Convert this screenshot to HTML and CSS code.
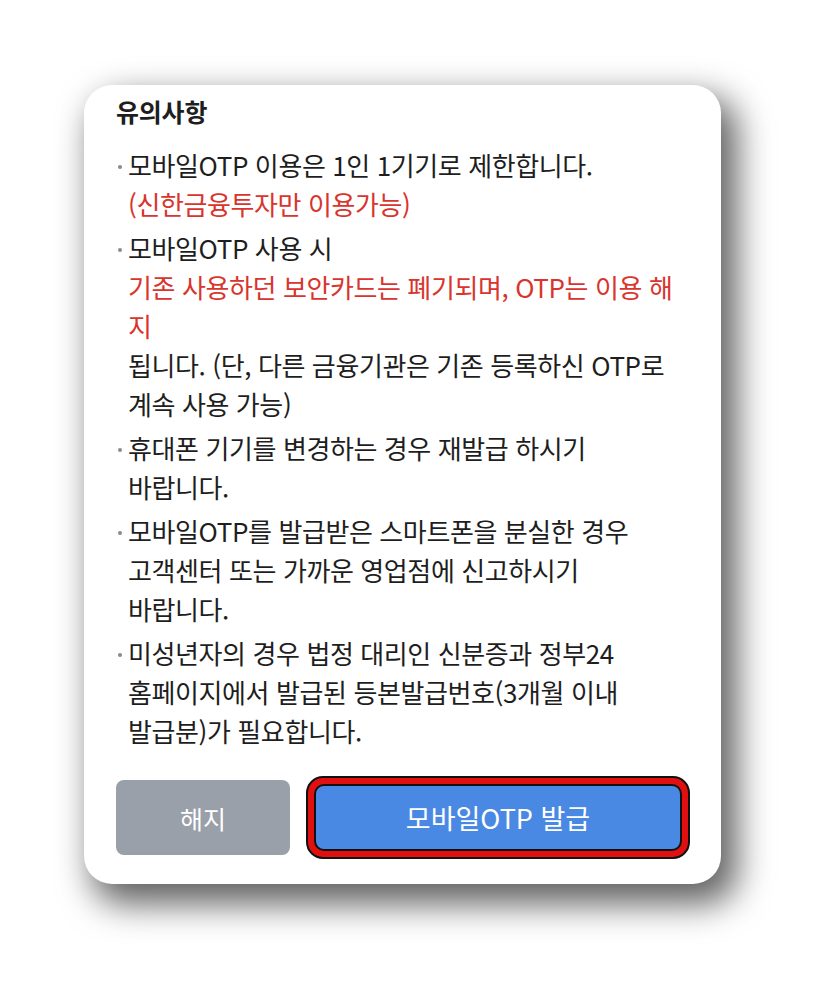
FILE: index.html
```html
<!DOCTYPE html>
<html lang="ko">
<head>
<meta charset="utf-8">
<title>유의사항</title>
<link rel="stylesheet" href="styles.css">
</head>
<body>
<div class="sheet">
  <h2 class="title">유의사항</h2>
  <ul class="notes">
    <li>모바일OTP 이용은 1인 1기기로 제한합니다.<br><span class="warn">(신한금융투자만 이용가능)</span></li>
    <li>모바일OTP 사용 시<br><span class="warn">기존 사용하던 보안카드는 폐기되며, OTP는 이용 해<br>지</span><br>됩니다. (단, 다른 금융기관은 기존 등록하신 OTP로<br>계속 사용 가능)</li>
    <li>휴대폰 기기를 변경하는 경우 재발급 하시기<br>바랍니다.</li>
    <li>모바일OTP를 발급받은 스마트폰을 분실한 경우<br>고객센터 또는 가까운 영업점에 신고하시기<br>바랍니다.</li>
    <li>미성년자의 경우 법정 대리인 신분증과 정부24<br>홈페이지에서 발급된 등본발급번호(3개월 이내<br>발급분)가 필요합니다.</li>
  </ul>
  <div class="actions">
    <button class="btn btn-cancel" type="button">해지</button>
    <div class="highlight">
      <button class="btn btn-issue" type="button">모바일OTP 발급</button>
    </div>
  </div>
</div>
</body>
</html>
```

FILE: styles.css
```css
html, body {
  margin: 0;
  padding: 0;
  background: #ffffff;
}

body {
  box-sizing: border-box;
  min-height: 990px;
  padding: 85px 0 106px 84px;
  font-family: "Noto Sans CJK KR", "Noto Sans", sans-serif;
  color: #1e1e1e;
}

.sheet {
  box-sizing: border-box;
  width: 637px;
  height: 799px;
  padding: 0 31px 0 32px;
  background: #ffffff;
  border-radius: 28px;
  box-shadow: 12px 16px 34px 4px rgba(0, 0, 0, 0.62);
  display: flex;
  flex-direction: column;
}

.title {
  margin: 10px 0 0 0;
  font-size: 25px;
  font-weight: 700;
  line-height: 32px;
  letter-spacing: -0.2px;
}

.notes {
  list-style: none;
  margin: 18px 0 0 0;
  padding: 0;
  display: flex;
  flex-direction: column;
  gap: 5px;
}

.notes li {
  position: relative;
  padding-left: 12px;
  font-size: 26px;
  line-height: 39px;
  letter-spacing: -0.4px;
  white-space: nowrap;
}

.notes li::before {
  content: "";
  position: absolute;
  left: 2px;
  top: 20px;
  width: 4px;
  height: 4px;
  border-radius: 50%;
  background: #8a8a8a;
}

.warn {
  color: #d9342e;
}

.actions {
  margin-top: auto;
  margin-bottom: 25px;
  display: flex;
  align-items: center;
  gap: 16px;
}

.btn {
  border: 0;
  font-family: inherit;
  color: #ffffff;
  cursor: pointer;
}

.btn-cancel {
  width: 174px;
  height: 75px;
  border-radius: 8px;
  background: #9aa0aa;
  font-size: 25px;
}

.highlight {
  flex: 1;
  box-sizing: border-box;
  height: 83px;
  padding: 6px;
  border: 2px solid #111111;
  border-radius: 17px;
  background: #e01010;
  display: flex;
}

.btn-issue {
  flex: 1;
  box-sizing: border-box;
  border: 2px solid #111111;
  border-radius: 10px;
  background: #4a89e3;
  font-size: 27px;
}
```
